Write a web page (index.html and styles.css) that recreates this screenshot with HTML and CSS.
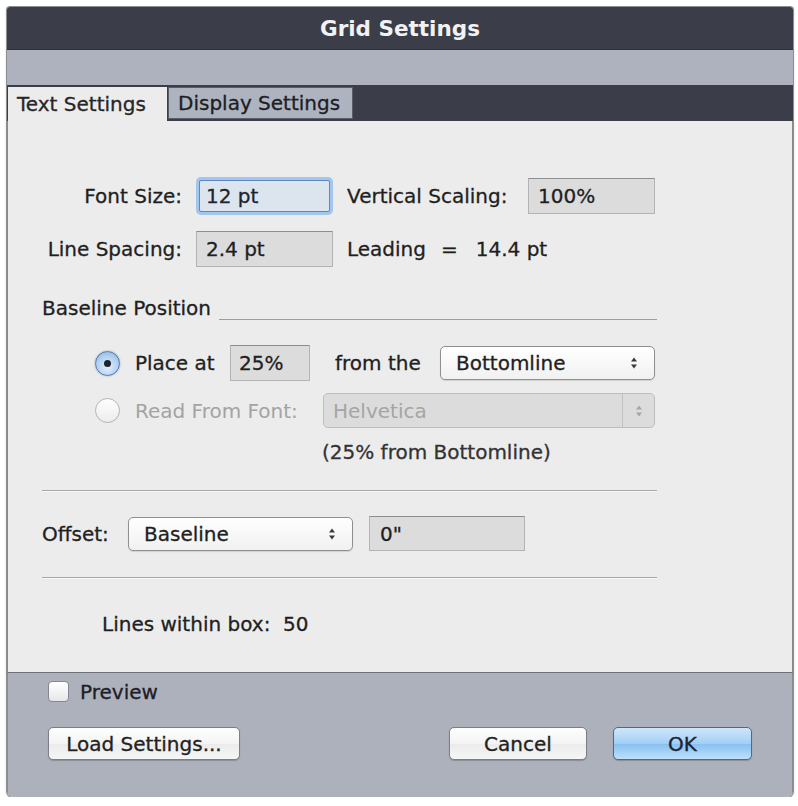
FILE: index.html
```html
<!DOCTYPE html>
<html>
<head>
<meta charset="utf-8">
<title>Grid Settings</title>
<link rel="stylesheet" href="styles.css">
</head>
<body>
<div class="dialog">
  <div class="titlebar">Grid Settings</div>
  <div class="band"></div>
  <div class="tabbar">
    <div class="tab active">Text Settings</div>
    <div class="tab">Display Settings</div>
  </div>
  <div class="content">
    <div class="metrics">
      <div class="label right">Font Size:</div>
      <div class="cell"><div class="field focused">12 pt</div></div>
      <div class="label">Vertical Scaling:</div>
      <div class="cell"><div class="field">100%</div></div>
      <div class="label right">Line Spacing:</div>
      <div class="cell"><div class="field">2.4 pt</div></div>
      <div class="label span2"><span>Leading</span><span class="eq">=</span><span>14.4 pt</span></div>
    </div>

    <div class="heading"><span>Baseline Position</span><span class="rule"></span></div>

    <div class="choice first">
      <span class="radio on"><span class="dot"></span></span>
      <span class="clabel place">Place at</span>
      <div class="field pct">25%</div>
      <span class="clabel fromthe">from the</span>
      <div class="select bottomline"><span>Bottomline</span>
        <svg class="updown" width="8" height="14" viewBox="0 0 8 14"><path d="M1 5.5 L4 1.5 L7 5.5Z M1 8.5 L4 12.5 L7 8.5Z" fill="#3a3a3a"/></svg>
      </div>
    </div>
    <div class="choice second">
      <span class="radio"></span>
      <span class="clabel readfont disabled">Read From Font:</span>
      <div class="select off helvetica"><span class="val">Helvetica</span>
        <span class="arrowbox"><svg width="8" height="14" viewBox="0 0 8 14"><path d="M1 5.5 L4 1.5 L7 5.5Z M1 8.5 L4 12.5 L7 8.5Z" fill="#a5a5a5"/></svg></span>
      </div>
    </div>
    <div class="note">(25% from Bottomline)</div>

    <div class="sep"></div>

    <div class="offset">
      <span class="olabel">Offset:</span>
      <div class="select baseline"><span>Baseline</span>
        <svg class="updown" width="8" height="14" viewBox="0 0 8 14"><path d="M1 5.5 L4 1.5 L7 5.5Z M1 8.5 L4 12.5 L7 8.5Z" fill="#3a3a3a"/></svg>
      </div>
      <div class="field zero">0"</div>
    </div>

    <div class="sep second"></div>

    <div class="lines">Lines within box:&nbsp;&nbsp;50</div>
  </div>
  <div class="footer">
    <div class="check-row"><span class="checkbox"></span><span>Preview</span></div>
    <div class="buttons">
      <button class="btn load">Load Settings...</button>
      <span class="spacer"></span>
      <button class="btn cancel">Cancel</button>
      <button class="btn ok">OK</button>
    </div>
  </div>
</div>
</body>
</html>
```

FILE: styles.css
```css
* { box-sizing: border-box; }

body {
  margin: 0;
  background: #ffffff;
  font-family: "DejaVu Sans", "Liberation Sans", sans-serif;
  font-size: 20px;
  color: #1f1f1f;
  -webkit-text-stroke: 0.3px;
}

.dialog {
  margin: 7px 0 0 7px;
  width: 786px;
  height: 790px;
  display: flex;
  flex-direction: column;
  border-radius: 3px 3px 6px 6px;
  overflow: hidden;
  box-shadow: 0 0 0 1px #8e8e8e, 0 1px 3px rgba(0,0,0,0.3);
}

.titlebar {
  height: 42px;
  flex: none;
  background: #3b3e49;
  color: #f2f2f4;
  font-weight: bold;
  font-size: 21.5px;
  -webkit-text-stroke: 0;
  display: flex;
  align-items: center;
  justify-content: center;
}

.band {
  height: 36px;
  flex: none;
  background: #adb2be;
  border-top: 1px solid #2e3037;
}

.tabbar {
  height: 36px;
  flex: none;
  background: #3b3e49;
  display: flex;
  align-items: flex-end;
  padding-left: 1px;
}

.tab {
  height: 32px;
  margin-bottom: 2px;
  width: 185px;
  padding-left: 9px;
  display: flex;
  align-items: center;
  background: #aeb3c0;
  border: 1px solid #5a5d67;
  color: #1c1e24;
}

.tab.active {
  width: 159px;
  height: 34px;
  margin-bottom: 0;
  margin-right: 1px;
  background: #ececec;
  border: none;
  color: #262626;
}

.content {
  height: 551px;
  flex: none;
  background: #ececec;
  border-left: 1px solid #8a8a8a;
  border-right: 1px solid #8a8a8a;
  padding: 56px 0 0 34px;
}

.metrics {
  display: grid;
  grid-template-columns: 140px 137px 167px 127px;
  grid-template-rows: 38px 36px;
  column-gap: 14px;
  row-gap: 16px;
  align-items: center;
}

.label { white-space: nowrap; }
.label.right { text-align: right; }
.label.span2 { grid-column: 3 / span 2; }
.label .eq { margin: 0 18px 0 15px; }

.cell { height: 100%; display: flex; align-items: center; }
.cell .field { width: 100%; height: 36px; }

.field {
  background: #dcdcdc;
  border: 1px solid #b3b3b3;
  border-top-color: #8e8e8e;
  padding-left: 9px;
  display: flex;
  align-items: center;
  white-space: nowrap;
}

.cell .field.focused {
  margin: 0 3px;
  height: 32px;
  background: #dce4ee;
  border: 1px solid #5e88bf;
  border-radius: 2px;
  box-shadow: 0 0 0 3px #a3c6ee;
  padding-left: 6px;
  color: #1c2432;
}

.heading {
  margin-top: 29px;
  width: 615px;
  height: 24px;
  line-height: 24px;
  display: flex;
  align-items: flex-end;
}

.heading .rule {
  flex: 1;
  margin-left: 8px;
  border-bottom: 1px solid #9d9d9d;
}

.choice {
  display: flex;
  align-items: center;
  padding-left: 53px;
}

.choice.first { margin-top: 25px; height: 36px; }
.choice.second { margin-top: 12px; height: 35px; }

.radio {
  width: 25px;
  height: 25px;
  flex: none;
  border-radius: 50%;
  margin-right: 15px;
  border: 1px solid #b4b4b4;
  background: linear-gradient(#ffffff, #ececec);
  display: flex;
  align-items: center;
  justify-content: center;
}

.radio.on {
  border-color: #5776a6;
  background: radial-gradient(circle at 50% 65%, #e4f0fc 0%, #b2d1f2 55%, #86b0e0 100%);
  box-shadow: 0 0 2px rgba(60,100,160,0.5);
}

.radio .dot {
  width: 7px;
  height: 7px;
  border-radius: 50%;
  background: #1d2430;
}

.clabel { white-space: nowrap; flex: none; }
.clabel.place { width: 95px; }
.clabel.fromthe { width: 105px; margin-left: 25px; }
.clabel.readfont { width: 188px; }
.disabled { color: #a3a3a3; -webkit-text-stroke: 0; }

.field.pct { width: 80px; height: 36px; padding-left: 8px; }

.select {
  display: flex;
  align-items: center;
  justify-content: space-between;
  padding: 0 16px 0 15px;
  border: 1px solid #8f8f8f;
  border-radius: 5px;
  background: linear-gradient(#ffffff, #f1f1f1);
  box-shadow: 0 1px 1px rgba(0,0,0,0.12);
  white-space: nowrap;
}

.select.bottomline { width: 215px; height: 34px; }

.select.off {
  width: 332px;
  height: 35px;
  padding: 0;
  background: #dcdcdc;
  border-color: #bdbdbd;
  color: #a5a5a5;
  box-shadow: none;
  -webkit-text-stroke: 0;
}

.select.off .val { padding-left: 9px; }

.select.off .arrowbox {
  width: 32px;
  height: 100%;
  border-left: 1px solid #c2c2c2;
  display: flex;
  align-items: center;
  justify-content: center;
}

.note {
  margin-top: 12px;
  line-height: 24px;
  padding-left: 280px;
  color: #333333;
}

.sep {
  width: 615px;
  margin-top: 26px;
  border-top: 1px solid #a7a7a7;
  border-bottom: 1px solid #f8f8f8;
}

.sep.second { margin-top: 26px; }

.offset {
  margin-top: 24px;
  height: 35px;
  display: flex;
  align-items: center;
}

.olabel { width: 86px; flex: none; }

.select.baseline { width: 225px; height: 34px; }

.field.zero { width: 156px; height: 35px; margin-left: 16px; padding-left: 10px; }

.lines {
  margin-top: 33px;
  line-height: 24px;
  padding-left: 60px;
}

.footer {
  flex: 1;
  background: #adb1bc;
  border-top: 1px solid #6e7078;
  border-left: 1px solid #8a8c94;
  border-right: 1px solid #8a8c94;
  padding: 8px 40px 0 40px;
}

.check-row {
  height: 21px;
  display: flex;
  align-items: center;
  color: #1e2026;
}

.checkbox {
  width: 21px;
  height: 21px;
  border: 1px solid #858891;
  border-radius: 4px;
  background: linear-gradient(#ffffff, #e6e7ea);
  margin-right: 11px;
}

.buttons {
  margin-top: 25px;
  display: flex;
  align-items: center;
}

.spacer { flex: 1; }

.btn {
  height: 33px;
  font-family: inherit;
  font-size: 20px;
  color: #222222;
  -webkit-text-stroke: 0.3px;
  border: 1px solid #7b7e86;
  border-radius: 5px;
  background: linear-gradient(#fefefe, #f4f4f4 50%, #ebebeb 51%, #f6f6f6);
  box-shadow: 0 1px 1px rgba(0,0,0,0.2);
  padding: 0;
}

.btn.load { width: 192px; }
.btn.cancel { width: 138px; margin-right: 26px; }
.btn.ok {
  width: 139px;
  border-color: #4e6893;
  background: linear-gradient(#cfe6fb, #a3cff5 50%, #86c0f1 51%, #bfe0fa);
  color: #1c2230;
}
```
